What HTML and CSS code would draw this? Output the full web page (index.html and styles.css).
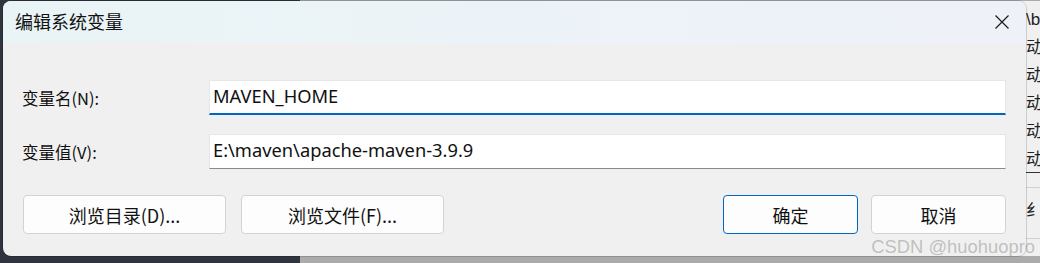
FILE: index.html
```html
<!DOCTYPE html>
<html lang="zh-CN">
<head>
<meta charset="utf-8">
<link rel="stylesheet" href="styles.css">
</head>
<body>
<div class="desktop">
  <div class="back-window">
    <div class="back-panel">
      <div class="back-line">\b</div>
      <div class="back-line">动</div>
      <div class="back-line">动</div>
      <div class="back-line">动</div>
      <div class="back-line">动</div>
      <div class="back-line underline">动</div>
      <div class="back-row">纟</div>
    </div>
  </div>
  <div class="dialog">
    <div class="titlebar">
      <span class="title">编辑系统变量</span>
      <svg class="close" width="14" height="14" viewBox="0 0 14 14"><path d="M0.5 0.5 L13.5 13.5 M13.5 0.5 L0.5 13.5" stroke="#1b1b1b" stroke-width="1.2" fill="none"/></svg>
    </div>
    <div class="content">
      <div class="fields">
        <label class="label">变量名(N):</label>
        <div class="input focused">MAVEN_HOME</div>
        <label class="label">变量值(V):</label>
        <div class="input">E:\maven\apache-maven-3.9.9</div>
      </div>
      <div class="buttons">
        <div class="btn wide">浏览目录(D)...</div>
        <div class="btn wide">浏览文件(F)...</div>
        <div class="spacer"></div>
        <div class="btn narrow primary">确定</div>
        <div class="btn narrow">取消</div>
      </div>
    </div>
  </div>
  <div class="watermark">CSDN @huohuopro</div>
</div>
</body>
</html>
```

FILE: styles.css
```css
* { box-sizing: border-box; }
html, body { margin: 0; padding: 0; }
body {
  width: 1040px;
  height: 263px;
  overflow: hidden;
  font-family: "Noto Sans", "Noto Sans CJK SC", sans-serif;
  color: #1a1a1a;
}
.desktop {
  position: relative;
  width: 1040px;
  height: 263px;
  background: #30343e;
}
.back-window {
  position: absolute;
  left: 300px;
  top: 0;
  right: 0;
  bottom: 0;
  background: #ababab;
}
.back-panel {
  position: absolute;
  left: 720px;
  top: 1px;
  right: 0;
  bottom: 7px;
  background: #f0f0f0;
  padding: 8px 0 0 6px;
  font-size: 17px;
  color: #222;
  font-family: "Liberation Sans", "Noto Sans CJK SC", sans-serif;
}
.back-line { height: 28px; line-height: 22px; white-space: nowrap; }
.back-line.underline { border-bottom: 1px solid #333; height: 24px; }
.back-row {
  margin-top: 14px;
  border-top: 1px solid #d0d0d0;
  border-bottom: 1px solid #d0d0d0;
  height: 52px;
  padding-top: 12px;
  line-height: 22px;
}
.dialog {
  position: absolute;
  left: 3px;
  top: 1px;
  width: 1023px;
  height: 255px;
  background: #f0f0f0;
  border-radius: 8px;
  overflow: hidden;
  box-shadow: 0 0 0 1px rgba(0,0,0,0.15);
}
.titlebar {
  height: 42px;
  background: linear-gradient(90deg, #e9f4f6 0%, #ecf3f8 50%, #eef1f8 100%);
  display: flex;
  align-items: center;
  justify-content: space-between;
  padding: 0 17px 0 12px;
}
.title {
  font-family: "Noto Sans CJK SC", sans-serif;
  font-size: 18px;
  color: #111;
  margin-top: -2px;
}
.close { margin-top: 0px; }
.content {
  padding: 37px 20px 0 19px;
}
.fields {
  display: grid;
  grid-template-columns: 187px 797px;
  row-gap: 19px;
  align-items: center;
}
.label {
  font-family: "Noto Sans CJK SC", sans-serif;
  font-size: 16.5px;
  color: #111;
}
.input {
  height: 35px;
  background: #ffffff;
  border: 1px solid #e6e6e6;
  border-bottom: 1px solid #8a8a8a;
  padding: 2px 0 0 3px;
  font-family: "Noto Sans", sans-serif;
  font-size: 18.3px;
  line-height: 26px;
  color: #111;
}
.input.focused {
  border-bottom: 2px solid #0067c0;
}
.buttons {
  display: flex;
  margin-top: 26px;
  padding-left: 1px;
}
.btn {
  height: 39px;
  background: #fdfdfd;
  border: 1px solid #d3d3d3;
  border-radius: 4px;
  display: flex;
  align-items: center;
  justify-content: center;
  font-family: "Noto Sans CJK SC", sans-serif;
  font-size: 18px;
  color: #111;
}
.btn.wide { width: 203px; margin-right: 15px; }
.btn.narrow { width: 135px; }
.btn.primary { border: 1px solid #0067c0; margin-right: 13px; }
.spacer { flex: 1; }
.watermark {
  position: absolute;
  right: 5px;
  bottom: 6px;
  line-height: 20px;
  font-family: "Liberation Sans", sans-serif;
  font-size: 18.4px;
  color: rgba(150,150,150,0.55);
}
```
